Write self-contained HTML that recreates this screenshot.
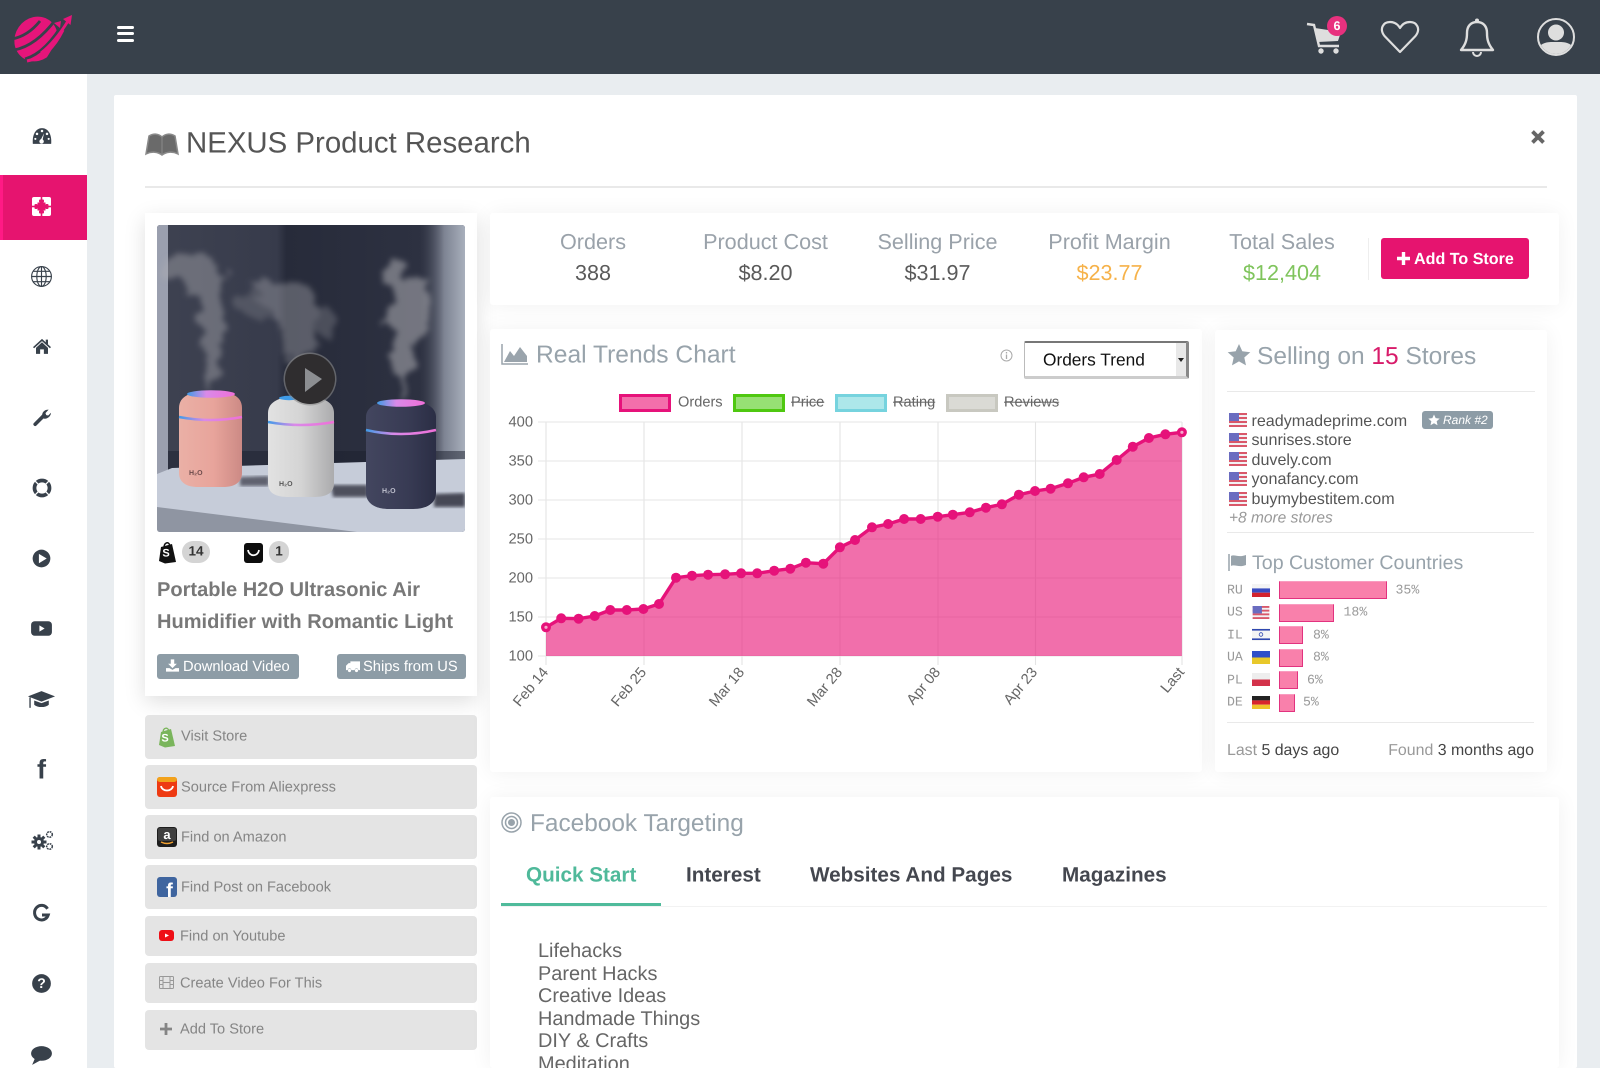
<!DOCTYPE html>
<html><head><meta charset="utf-8"><title>NEXUS Product Research</title>
<style>
*{box-sizing:border-box}
html,body{margin:0;padding:0;width:1600px;height:1068px;overflow:hidden;background:#fff;font-family:"Liberation Sans",Arial,sans-serif;text-rendering:geometricPrecision}
#root{position:absolute;left:0;top:0;width:1600px;height:1068px;overflow:hidden;background:#e9edf0}
.a{position:absolute}
.t{position:absolute;white-space:nowrap;line-height:1;transform:translateY(-50%)}
.c{transform:translate(-50%,-50%)}
.card{position:absolute;background:#fff;border-radius:3px;box-shadow:0 1px 22px rgba(0,0,0,.06)}
.lb{position:absolute;left:145px;width:332px;background:#e4e4e4;border-radius:4px}
.lt{color:#858585;font-size:14.6px}
.gb{position:absolute;top:654px;height:25px;background:#8d9ca6;border-radius:3px;color:#fff;font-size:14.7px;line-height:26px;white-space:nowrap}
.stl{color:#9aa2aa;font-size:21.6px}
.stv{color:#5a5a5a;font-size:21.6px}
.h{color:#98a3ab}
.st{color:#555;font-size:16.1px}
.m{font-family:"Liberation Mono",monospace;font-size:13.2px;color:#999}
.bar{position:absolute;left:1279px;height:18px;background:#f980ab;border:1px solid #e2327f;border-top-color:#f99cc0}
.tab{font-weight:bold;font-size:20.7px;color:#44474f}
.li{color:#666;font-size:19.9px;left:538px}
.lg{position:absolute;top:394px;height:18px;width:52px;border-width:3px;border-style:solid}
.lgt{font-size:14.6px;color:#666}
.si{position:absolute;left:29px;width:25px;height:25px}
svg{display:block;overflow:visible}
</style></head><body><div id="root">
<svg width="0" height="0" style="position:absolute"><defs>
<symbol id="us" viewBox="0 0 18 14"><rect width="18" height="14" rx="1" fill="#f2f2f4"/><rect y="0" width="18" height="2" fill="#d9586a"/><rect y="4" width="18" height="2" fill="#d9586a"/><rect y="8" width="18" height="2" fill="#d9586a"/><rect y="12" width="18" height="2" fill="#d9586a"/><rect width="10" height="8" fill="#6a6cc0"/></symbol>
<filter id="sm" x="-40%" y="-40%" width="180%" height="180%"><feTurbulence type="fractalNoise" baseFrequency=".045" numOctaves="4" seed="7"/><feDisplacementMap in="SourceGraphic" scale="30" xChannelSelector="R" yChannelSelector="G"/><feGaussianBlur stdDeviation="2.800"/></filter>
<filter id="bl1"><feGaussianBlur stdDeviation="1.500"/></filter>
<linearGradient id="wall" x1="0" x2="1" y1="0" y2="0"><stop offset="0" stop-color="#3e4251"/><stop offset=".39" stop-color="#373b4b"/><stop offset=".42" stop-color="#272b3a"/><stop offset=".85" stop-color="#2d3141"/><stop offset="1" stop-color="#4a4e5c"/></linearGradient>
<linearGradient id="rw" x1="0" x2="1" y1="0" y2="0"><stop offset="0" stop-color="#2e3242" stop-opacity="0"/><stop offset=".55" stop-color="#7e8493"/><stop offset="1" stop-color="#a8afbc"/></linearGradient>
<linearGradient id="pk" x1="0" x2="1"><stop offset="0" stop-color="#eab0a6"/><stop offset=".55" stop-color="#e8a49b"/><stop offset="1" stop-color="#cc8a85"/></linearGradient>
<linearGradient id="wh" x1="0" x2="1"><stop offset="0" stop-color="#e2e2e2"/><stop offset=".5" stop-color="#d4d4d4"/><stop offset="1" stop-color="#ababad"/></linearGradient>
<linearGradient id="nv" x1="0" x2="1"><stop offset="0" stop-color="#43465f"/><stop offset=".6" stop-color="#383b54"/><stop offset="1" stop-color="#2b2e45"/></linearGradient>
<linearGradient id="rg" x1="0" x2="1"><stop offset="0" stop-color="#3f9be8"/><stop offset=".4" stop-color="#d98ae8"/><stop offset="1" stop-color="#ef6fd8"/></linearGradient>
</defs></svg>

<!-- header -->
<div class="a" style="left:0;top:0;width:1600px;height:74px;background:#38414b"></div>
<svg class="a" style="left:10px;top:12px" width="66" height="54" viewBox="0 0 66 54">
<ellipse cx="26" cy="27" rx="21" ry="23" fill="#e5157a" transform="rotate(35 26 27)"/>
<path d="M34 50 L60 8 L66 14 L48 46Z" fill="#38414b"/>
<g fill="none" stroke="#38414b" stroke-width="2.800"><path d="M2 27 Q18 24 30 9"/><path d="M4 38 Q26 34 46 7"/><path d="M15 47 Q36 41 55 8"/></g>
<path d="M17 49 C34 46 44 36 53 18" fill="none" stroke="#e5157a" stroke-width="3"/>
<path d="M31 41 C40 34 50 22 58 9" fill="none" stroke="#e5157a" stroke-width="2.800"/>
<path d="M62 3 L60.500 13 L53 7Z" fill="#e5157a"/><path d="M51 9 L50 16 L44 11Z" fill="#e5157a"/>
</svg>
<div class="a" style="left:117px;top:26px;width:17px;height:3px;background:#fff;border-radius:2px"></div>
<div class="a" style="left:117px;top:32px;width:17px;height:3px;background:#fff;border-radius:2px"></div>
<div class="a" style="left:117px;top:39px;width:17px;height:3px;background:#fff;border-radius:2px"></div>

<svg class="a" style="left:1305px;top:20px" width="40" height="36" viewBox="0 0 40 36">
<path d="M2 4 L9 5 L14 26 L34 26" fill="none" stroke="#dedede" stroke-width="2.400"/>
<path d="M10 8 L36 12 L33 21 L13 22Z" fill="#dedede"/>
<circle cx="16" cy="31" r="2.700" fill="#dedede"/><circle cx="31" cy="31" r="2.700" fill="#dedede"/>
</svg>
<div class="a" style="left:1327px;top:16px;width:20px;height:20px;border-radius:50%;background:#e8317e"></div>
<div class="t c" style="left:1337px;top:26px;font-size:12.500px;font-weight:bold;color:#fff">6</div>
<svg class="a" style="left:1380px;top:20px" width="40" height="34" viewBox="0 0 40 34"><path d="M20 32 L4.500 16 C-1 9 3 2 10 2 C14.500 2 18 4.500 20 8 C22 4.500 25.500 2 30 2 C37 2 41 9 35.500 16Z" fill="none" stroke="#dedede" stroke-width="2.200" stroke-linejoin="round"/></svg>
<svg class="a" style="left:1459px;top:17px" width="36" height="40" viewBox="0 0 36 40"><path d="M2 33 C7 27 8 22 8 16 C8 9 12 5 18 5 C24 5 28 9 28 16 C28 22 29 27 34 33Z" fill="none" stroke="#dedede" stroke-width="2.400" stroke-linejoin="round"/><circle cx="18" cy="3.500" r="2" fill="#dedede"/><path d="M14 35 A4 4 0 0 0 22 35" fill="none" stroke="#dedede" stroke-width="2"/></svg>
<svg class="a" style="left:1536px;top:17px" width="40" height="40" viewBox="0 0 40 40"><defs><clipPath id="uc"><circle cx="20" cy="20" r="17"/></clipPath></defs><circle cx="20" cy="20" r="18" fill="none" stroke="#dedede" stroke-width="2"/><circle cx="20" cy="15.500" r="8" fill="#dedede"/><path d="M2 40 L2 30 C8 25 13 25 16 25 L24 25 C27 25 32 25 38 30 L38 40Z" fill="#dedede" clip-path="url(#uc)"/></svg>

<!-- sidebar -->
<div class="a" style="left:0;top:74px;width:87px;height:994px;background:#fff"></div>
<div class="a" style="left:0;top:175px;width:87px;height:65px;background:#e6146f;border-left:3px solid #ff1a85"></div>
<svg class="a" style="left:31.500px;top:127px" width="20" height="18" viewBox="0 0 24 21"><path d="M1 20 C0 8 5 1 12 1 C19 1 24 8 23 20Z" fill="#38414b"/><path d="M12 18 L14.500 7 L10 16Z" fill="#fff"/><circle cx="11.500" cy="17" r="2.700" fill="#fff"/><circle cx="12" cy="4.500" r="1.500" fill="#fff"/><circle cx="6" cy="8" r="1.500" fill="#fff"/><circle cx="18" cy="8" r="1.500" fill="#fff"/><circle cx="4" cy="14" r="1.300" fill="#fff"/><circle cx="20" cy="14" r="1.300" fill="#fff"/></svg>
<svg class="a" style="left:32px;top:197px" width="19" height="19" viewBox="0 0 19 19"><rect width="19" height="19" rx="2" fill="#fff"/><rect x="5.500" y="5.500" width="8" height="8" fill="#e6146f"/><rect x="8.700" y="0" width="1.600" height="19" fill="#e6146f"/><rect x="0" y="8.700" width="19" height="1.600" fill="#e6146f"/><rect x="7" y="2.500" width="5" height="3" rx="1" fill="#e6146f"/><rect x="7" y="13.500" width="5" height="3" rx="1" fill="#e6146f"/><rect x="2.500" y="7" width="3" height="5" rx="1" fill="#e6146f"/><rect x="13.500" y="7" width="3" height="5" rx="1" fill="#e6146f"/></svg>
<svg class="si" style="top:264px" viewBox="0 0 24 24" fill="none" stroke="#38414b" stroke-width="1.100"><circle cx="12" cy="12" r="9.500"/><ellipse cx="12" cy="12" rx="4.500" ry="9.500"/><path d="M12 2.500V21.500M2.500 12H21.500M4 7H20M4 17H20"/></svg>
<svg class="a" style="left:32.500px;top:338px" width="18" height="16" viewBox="0 0 24 21"><path d="M12 1 L24 12 L22.500 13.500 L12 4 L1.500 13.500 L0 12Z" fill="#38414b"/><path d="M4 13 L12 5.500 L20 13 V21 H14.500 V15 H9.500 V21 H4Z" fill="#38414b"/><rect x="17" y="2" width="3" height="6" fill="#38414b"/></svg>
<svg class="a" style="left:32px;top:408px" width="19" height="19" viewBox="0 0 24 24"><path d="M4 20.500 L14 10.500" stroke="#38414b" stroke-width="4.500" stroke-linecap="round"/><path d="M13 11 C12 6 15 2 21 2 L17 6.500 L18 9 L20.500 9.500 L24 6 C24 11 18 15 14 13Z" fill="#38414b"/></svg>
<svg class="a" style="left:32px;top:478px" width="20" height="20" viewBox="0 0 24 24" fill="none" stroke="#38414b"><circle cx="12" cy="12" r="9" stroke-width="4.500"/><path d="M4 4L9 9M20 4L15 9M4 20L9 15M20 20L15 15" stroke="#fff" stroke-width="1.500"/></svg>
<svg class="si" style="top:546px" viewBox="0 0 24 24"><circle cx="12" cy="12" r="8.500" fill="#38414b"/><path d="M9.500 7.500 L17 12 L9.500 16.500Z" fill="#fff"/></svg>
<svg class="si" style="top:616px" viewBox="0 0 24 24"><rect x="2" y="5" width="20" height="14" rx="3.500" fill="#38414b"/><path d="M10 9 L15 12 L10 15Z" fill="#fff"/></svg>
<svg class="si" style="top:687px" viewBox="0 0 24 24"><path d="M12 4 L25 9 L12 14 L-1 9Z" fill="#38414b"/><path d="M5 13 V17 C8 20 16 20 19 17 V13 L12 15.500Z" fill="#38414b"/><path d="M1 10V20" stroke="#38414b" stroke-width="1.300"/></svg>
<div class="t c" style="left:41.500px;top:770px;font-size:27px;font-weight:bold;color:#38414b">f</div>
<svg class="a" style="left:31px;top:830px" width="23" height="21" viewBox="0 0 23 21"><g fill="#38414b"><circle cx="8" cy="12" r="5"/><path d="M6.500 4.500H9.500V19.500H6.500ZM.5 10.500H15.500V13.500H.5Z"/><path d="M6.500 4.500H9.500V19.500H6.500ZM.5 10.500H15.500V13.500H.5Z" transform="rotate(45 8 12)"/></g><circle cx="8" cy="12" r="2" fill="#fff"/><g fill="#fff" stroke="#38414b" stroke-width="1.500" stroke-dasharray="1.800 .8"><circle cx="18.500" cy="4.500" r="2.800"/><circle cx="18.500" cy="16.500" r="2.800"/></g></svg>
<svg class="a" style="left:33px;top:905px" width="17" height="18" viewBox="0 0 17 18"><path d="M14.500 3.800 A7 7.300 0 1 0 15.200 10 H9" fill="none" stroke="#38414b" stroke-width="3"/></svg>
<svg class="si" style="top:971px" viewBox="0 0 24 24"><circle cx="12" cy="12" r="9" fill="#38414b"/></svg>
<div class="t c" style="left:41.500px;top:983px;font-size:14px;font-weight:bold;color:#fff">?</div>
<svg class="si" style="top:1042px" viewBox="0 0 24 24"><ellipse cx="12" cy="11" rx="10" ry="7" fill="#38414b"/><path d="M6 15 L3 22 L12 17Z" fill="#38414b"/></svg>

<!-- main -->
<div class="a" style="left:114px;top:95px;width:1463px;height:973px;background:#fff;border-radius:2px"></div>
<svg class="a" style="left:145px;top:131px" width="34" height="26" viewBox="0 0 34 26"><path d="M1 23 L4 5 C9 2 14 3 17 6 C20 3 25 2 30 5 L33 23 C27 20 21 21 17 24 C13 21 7 20 1 23Z" fill="#6a6a6a" stroke="#8a8a8a" stroke-width="1.500"/><path d="M17 6V24" stroke="#8a8a8a"/></svg>
<div class="t" style="left:186px;top:143px;font-size:29.400px;color:#555">NEXUS Product Research</div>
<svg class="a" style="left:1530px;top:129px" width="16" height="16" viewBox="0 0 16 16"><path d="M2.500 2.500L13.500 13.500M13.500 2.500L2.500 13.500" stroke="#666" stroke-width="3.800"/></svg>
<div class="a" style="left:145px;top:186px;width:1402px;height:2px;background:#e9e9e9"></div>

<!-- product card -->
<div class="a" style="left:145px;top:213px;width:332px;height:483px;background:#fff;box-shadow:0 6px 20px rgba(0,0,0,.13)"></div>
<svg class="a" style="left:157px;top:225px;border-radius:3px" width="308" height="307" viewBox="0 0 308 307">
<defs><clipPath id="ic"><rect width="308" height="307" rx="3"/></clipPath></defs>
<g clip-path="url(#ic)">
<rect width="308" height="307" fill="url(#wall)"/>
<rect x="262" width="46" height="240" fill="url(#rw)"/>
<rect width="11" height="250" fill="#9a9fae"/>
<rect x="11" y="226" width="297" height="30" fill="#1c202d" opacity=".5"/>
<path d="M0 249 L15 243 L110 240 L308 234 V307 H0Z" fill="#c6ccd9"/>
<path d="M0 282 L200 307 H0Z" fill="#8f95a2"/>
<g filter="url(#sm)" fill="#aeaeb2">
<g opacity=".42"><ellipse cx="56" cy="145" rx="4" ry="24"/><ellipse cx="56" cy="115" rx="9" ry="26"/><ellipse cx="54" cy="85" rx="13" ry="24"/><ellipse cx="46" cy="55" rx="20" ry="20"/><ellipse cx="32" cy="42" rx="22" ry="14"/></g>
<g opacity=".38"><ellipse cx="140" cy="115" rx="18" ry="20"/><ellipse cx="140" cy="85" rx="24" ry="25"/><ellipse cx="125" cy="68" rx="24" ry="15"/><ellipse cx="100" cy="78" rx="22" ry="13" opacity=".6"/><ellipse cx="165" cy="98" rx="14" ry="14" opacity=".7"/></g>
<g opacity=".55"><ellipse cx="248" cy="160" rx="4" ry="18"/><ellipse cx="248" cy="130" rx="10" ry="24"/><ellipse cx="250" cy="98" rx="19" ry="28"/><ellipse cx="254" cy="70" rx="20" ry="20"/><ellipse cx="240" cy="52" rx="12" ry="12"/></g>
</g>
<path d="M83 252 L112 251 L112 261 L83 261Z" fill="#1a1d29" opacity=".6" filter="url(#bl1)"/>
<path d="M174 260 L211 260 L211 272 L176 272Z" fill="#1a1d29" opacity=".7" filter="url(#bl1)"/>
<path d="M277 269 L308 268 V282 L277 282Z" fill="#1a1d29" opacity=".75" filter="url(#bl1)"/>
<path d="M22 183 C22 171 34 166 54 166 C74 166 85 171 85 183 L85 248 C85 257 78 262 66 262 L41 262 C29 262 22 257 22 248Z" fill="url(#pk)"/>
<ellipse cx="54" cy="169" rx="24" ry="3.800" fill="url(#rg)"/>
<path d="M22 192 Q54 198 85 192" fill="none" stroke="url(#rg)" stroke-width="2.500"/>
<text x="32" y="250" font-family="Liberation Sans" font-size="7" font-weight="bold" fill="#6b4a4a">H₂O</text>
<path d="M111 188 C111 176 124 171 144 171 C164 171 177 176 177 188 L177 258 C177 268 170 272 156 272 L132 272 C118 272 111 268 111 258Z" fill="url(#wh)"/>
<ellipse cx="132" cy="173" rx="10" ry="2.200" fill="#3f9be8"/>
<path d="M111 197 Q144 203 177 197" fill="none" stroke="url(#rg)" stroke-width="2.500"/>
<text x="122" y="261" font-family="Liberation Sans" font-size="7" font-weight="bold" fill="#555">H₂O</text>
<path d="M209 192 C209 181 222 175 244 175 C266 175 279 181 279 192 L279 268 C279 278 270 284 256 284 L232 284 C218 284 209 278 209 268Z" fill="url(#nv)"/>
<ellipse cx="244" cy="178" rx="24" ry="3.800" fill="url(#rg)"/>
<path d="M209 205 Q244 213 279 205" fill="none" stroke="url(#rg)" stroke-width="2.500"/>
<text x="225" y="268" font-family="Liberation Sans" font-size="7" font-weight="bold" fill="#c0c2cf">H₂O</text>
<circle cx="153" cy="154" r="26.500" fill="#8a8a8a" opacity=".6"/>
<circle cx="153" cy="154" r="25" fill="#2f2d2f"/>
<path d="M148 143 L165 154 L148 167Z" fill="#8c8e92"/>
</g></svg>

<svg class="a" style="left:158px;top:541px" width="19" height="23" viewBox="0 0 19 23"><path d="M1 20 L3 6 L14 3 L18 21 L7 22.500Z" fill="#111"/><path d="M6 7 C6 1 11 0 12 5" fill="none" stroke="#111" stroke-width="1.500"/></svg>
<div class="t c" style="left:166px;top:554px;font-size:11px;font-weight:bold;color:#fff">S</div>
<div class="a" style="left:182px;top:541px;width:28px;height:22px;background:#d4d4d4;border-radius:11px"></div>
<div class="t c" style="left:196px;top:551px;font-size:13.500px;font-weight:bold;color:#333">14</div>
<svg class="a" style="left:244px;top:543px" width="19" height="20" viewBox="0 0 19 20"><rect width="19" height="20" rx="3" fill="#0d0d0d"/><path d="M4 7 C5 14 14 14 15 7" fill="none" stroke="#fff" stroke-width="1.700"/></svg>
<div class="a" style="left:269px;top:541px;width:20px;height:22px;background:#d4d4d4;border-radius:11px"></div>
<div class="t c" style="left:279px;top:551px;font-size:13.500px;font-weight:bold;color:#333">1</div>
<div class="t" style="left:157px;top:590px;font-size:20.050px;font-weight:bold;color:#787878">Portable H2O Ultrasonic Air</div>
<div class="t" style="left:157px;top:622px;font-size:20.050px;font-weight:bold;color:#787878">Humidifier with Romantic Light</div>
<div class="gb" style="left:157px;width:142px;padding-left:26px">Download Video</div>
<svg class="a" style="left:166px;top:659px" width="13" height="13" viewBox="0 0 15 14"><path d="M5.500 0H9.500V5H12.500L7.500 10L2.500 5H5.500Z" fill="#fff"/><path d="M0 10H4L7.500 12L11 10H15V14H0Z" fill="#fff"/></svg>
<div class="gb" style="left:337px;width:129px;padding-left:26px">Ships from US</div>
<svg class="a" style="left:346px;top:661px" width="14" height="12" viewBox="0 0 16 13"><path d="M5 0H16V10H14A2 2 0 0 0 10 10H6A2 2 0 0 0 2 10H0V5L3 2H5Z" fill="#fff"/><circle cx="4" cy="10.500" r="1.800" fill="#fff"/><circle cx="12" cy="10.500" r="1.800" fill="#fff"/></svg>

<div class="lb" style="top:715px;height:44px"></div>
<svg class="a" style="left:158px;top:727px" width="18" height="21" viewBox="0 0 18 21"><path d="M1 18 L3 5 L13 2 L17 19 L7 20.500Z" fill="#7ab55c"/><path d="M5 6 C5 0 10 0 11 4" fill="none" stroke="#7ab55c" stroke-width="1.300"/></svg>
<div class="t c" style="left:165px;top:739px;font-size:11px;font-weight:bold;color:#fff">S</div>
<div class="t lt" style="left:181px;top:737px">Visit Store</div>
<div class="lb" style="top:765px;height:44px"></div>
<svg class="a" style="left:157px;top:777px" width="20" height="20" viewBox="0 0 20 20"><rect width="20" height="20" rx="3" fill="#ee3a12"/><rect width="20" height="5" rx="3" fill="#f2a21c"/><path d="M4 9 C5 15 15 15 16 9" fill="none" stroke="#fff" stroke-width="1.800"/></svg>
<div class="t lt" style="left:181px;top:787.500px">Source From Aliexpress</div>
<div class="lb" style="top:815px;height:44px"></div>
<svg class="a" style="left:157px;top:827px" width="20" height="20" viewBox="0 0 20 20"><rect width="20" height="20" rx="3" fill="#1d1d1d"/><rect x="1" y="1" width="18" height="13" rx="2" fill="#3f3f3f"/><text x="10" y="12" text-anchor="middle" font-family="Liberation Sans" font-weight="bold" font-size="13" fill="#fff">a</text><path d="M4 15 Q10 18 16 15" fill="none" stroke="#f0a030" stroke-width="1.500"/></svg>
<div class="t lt" style="left:181px;top:838px">Find on Amazon</div>
<div class="lb" style="top:865px;height:44px"></div>
<svg class="a" style="left:157px;top:877px" width="20" height="20" viewBox="0 0 20 20"><rect width="20" height="20" rx="3" fill="#3f659f"/><text x="12.500" y="20" text-anchor="middle" font-family="Liberation Sans" font-weight="bold" font-size="20" fill="#fff">f</text></svg>
<div class="t lt" style="left:181px;top:888px">Find Post on Facebook</div>
<div class="lb" style="top:916px;height:40px"></div>
<svg class="a" style="left:159px;top:930px" width="15" height="11" viewBox="0 0 15 11"><rect width="15" height="11" rx="3" fill="#ee0f16"/><path d="M6 3.500L10 5.500L6 7.500Z" fill="#fff"/></svg>
<div class="t lt" style="left:180px;top:937px">Find on Youtube</div>
<div class="lb" style="top:963px;height:40px"></div>
<svg class="a" style="left:159px;top:976px" width="15" height="13" viewBox="0 0 15 13" fill="none" stroke="#999" stroke-width="1"><rect x=".5" y=".5" width="14" height="12" rx="1"/><path d="M4 .5V12.500M11 .5V12.500M.5 4.500H4M.5 8.500H4M11 4.500H14.500M11 8.500H14.500M4 6.500H11"/></svg>
<div class="t lt" style="left:180px;top:984px">Create Video For This</div>
<div class="lb" style="top:1010px;height:40px"></div>
<svg class="a" style="left:160px;top:1023px" width="12" height="12" viewBox="0 0 12 12"><path d="M6 0V12M0 6H12" stroke="#858585" stroke-width="2.800"/></svg>
<div class="t lt" style="left:180px;top:1030px">Add To Store</div>

<!-- stats -->
<div class="card" style="left:490px;top:213px;width:1069px;height:92px"></div>
<div class="t c stl" style="left:593px;top:242px">Orders</div><div class="t c stv" style="left:593px;top:273px">388</div>
<div class="t c stl" style="left:765.500px;top:242px">Product Cost</div><div class="t c stv" style="left:765.500px;top:273px">$8.20</div>
<div class="t c stl" style="left:937.500px;top:242px">Selling Price</div><div class="t c stv" style="left:937.500px;top:273px">$31.97</div>
<div class="t c stl" style="left:1109.500px;top:242px">Profit Margin</div><div class="t c stv" style="left:1109.500px;top:273px;color:#f6b24a">$23.77</div>
<div class="t c stl" style="left:1282px;top:242px">Total Sales</div><div class="t c stv" style="left:1282px;top:273px;color:#7fc45c">$12,404</div>
<div class="a" style="left:1368px;top:238px;width:1px;height:42px;background:#eee"></div>
<div class="a" style="left:1381px;top:238px;width:148px;height:41px;background:#e6146f;border-radius:3px"></div>
<svg class="a" style="left:1397px;top:252px" width="13" height="13" viewBox="0 0 13 13"><path d="M6.500 0V13M0 6.500H13" stroke="#fff" stroke-width="3.400"/></svg>
<div class="t" style="left:1414px;top:258.500px;font-size:16.100px;font-weight:bold;color:#fff">Add To Store</div>

<!-- chart card -->
<div class="card" style="left:490px;top:329px;width:712px;height:443px"></div>
<svg class="a" style="left:501px;top:344px" width="27" height="21" viewBox="0 0 27 21"><path d="M1 0V20H27" fill="none" stroke="#9aa4ac" stroke-width="1.500"/><path d="M3 18 L9 7 L13 12 L19 3 L26 12 V18Z" fill="#9aa4ac"/></svg>
<div class="t h" style="left:536px;top:356px;font-size:24.600px">Real Trends Chart</div>
<svg class="a" style="left:1000px;top:349px" width="13" height="13" viewBox="0 0 13 13"><circle cx="6.500" cy="6.500" r="5.500" fill="none" stroke="#aaa"/><path d="M6.500 5.500V10M6.500 3V4.500" stroke="#aaa" stroke-width="1.300"/></svg>
<div class="a" style="left:1024px;top:341px;width:165px;height:38px;background:#fff;border:1px solid #bbb;border-top:2px solid #777;border-right:3px solid #888;border-bottom:3px solid #ccc;border-radius:2px"></div>
<div class="a" style="left:1176px;top:343px;width:10px;height:33px;background:#e8e8e8"></div>
<div class="a" style="left:1178px;top:358px;width:0;height:0;border:3px solid transparent;border-top:4px solid #222"></div>
<div class="t" style="left:1043px;top:360px;font-size:17.300px;color:#111">Orders Trend</div>

<div class="lg" style="left:619px;background:#f36fab;border-color:#e6127a"></div><div class="t lgt" style="left:678px;top:403px">Orders</div>
<div class="lg" style="left:733px;background:#97e074;border-color:#4fc810"></div><div class="t lgt" style="left:791px;top:403px;text-decoration:line-through">Price</div>
<div class="lg" style="left:835px;background:#ade7ea;border-color:#76d3de"></div><div class="t lgt" style="left:893px;top:403px;text-decoration:line-through">Rating</div>
<div class="lg" style="left:946px;background:#dadad5;border-color:#c8c8c0"></div><div class="t lgt" style="left:1004px;top:403px;text-decoration:line-through">Reviews</div>

<svg class="a" style="left:0;top:0" width="1600" height="1068" viewBox="0 0 1600 1068">
<defs><marker id="dot" markerUnits="userSpaceOnUse" markerWidth="12" markerHeight="12" refX="6" refY="6"><circle cx="6" cy="6" r="5" fill="#e6127a"/></marker></defs>
<g stroke="#ebebeb" stroke-width="1.200"><path d="M538 422H1182M538 461H1182M538 500H1182M538 539H1182M538 578H1182M538 617H1182M538 656H1182"/></g>
<g stroke="#e4e4e4" stroke-width="1.100"><path d="M546 422V665M644 422V665M742 422V665M840 422V665M938 422V665M1035.500 422V665M1182 422V665"/></g>
<polygon fill="rgba(233,22,120,.62)" points="546,656 546,627.300 561.200,618.300 578.600,618.700 594.700,616 610.300,610 626.800,610 643.400,609 659,604 676,577.700 692,575.700 708.100,574.700 725.100,574.300 741.100,573.300 757.200,573.300 774.200,570.700 790.300,568.700 805.900,562.700 823.300,563.700 839.900,547.300 855,540 872,527.300 888.100,524 904.100,519 920.700,519 937.700,516.700 952.800,514.700 969.800,512.300 985.900,507.700 1001.900,504.300 1018.900,494.700 1035,491 1050.600,488.700 1068,483.300 1083.700,477.300 1099.700,474 1116.700,460 1132.800,446.700 1148.900,438 1165.400,434.300 1181.900,432.300 1181.900,656"/>
<polyline fill="none" stroke="#e6127a" stroke-width="3.400" marker-start="url(#dot)" marker-mid="url(#dot)" marker-end="url(#dot)" points="546,627.300 561.200,618.300 578.600,618.700 594.700,616 610.300,610 626.800,610 643.400,609 659,604 676,577.700 692,575.700 708.100,574.700 725.100,574.300 741.100,573.300 757.200,573.300 774.200,570.700 790.300,568.700 805.900,562.700 823.300,563.700 839.900,547.300 855,540 872,527.300 888.100,524 904.100,519 920.700,519 937.700,516.700 952.800,514.700 969.800,512.300 985.900,507.700 1001.900,504.300 1018.900,494.700 1035,491 1050.600,488.700 1068,483.300 1083.700,477.300 1099.700,474 1116.700,460 1132.800,446.700 1148.900,438 1165.400,434.300 1181.900,432.300"/>
<circle cx="546" cy="627.300" r="1.600" fill="#f7a8cc"/><circle cx="1181.900" cy="432.300" r="1.600" fill="#f7a8cc"/>
<g font-family="Liberation Sans" font-size="14.700" fill="#666" text-anchor="end">
<text x="533" y="426.300">400</text><text x="533" y="465.300">350</text><text x="533" y="504.300">300</text><text x="533" y="543.300">250</text><text x="533" y="582.300">200</text><text x="533" y="621.300">150</text><text x="533" y="660.300">100</text>
<text transform="translate(549,672.500) rotate(-50)">Feb 14</text>
<text transform="translate(647,672.500) rotate(-50)">Feb 25</text>
<text transform="translate(745,672.500) rotate(-50)">Mar 18</text>
<text transform="translate(843,672.500) rotate(-50)">Mar 28</text>
<text transform="translate(941,672.500) rotate(-50)">Apr 08</text>
<text transform="translate(1038,672.500) rotate(-50)">Apr 23</text>
<text transform="translate(1185,672.500) rotate(-50)">Last</text>
</g></svg>

<!-- stores card -->
<div class="card" style="left:1215px;top:330px;width:332px;height:442px"></div>
<svg class="a" style="left:1227px;top:343px" width="24" height="24" viewBox="0 0 24 24"><path d="M12 1 L15.300 8.300 L23.300 9.200 L17.300 14.500 L19 22.400 L12 18.400 L5 22.400 L6.700 14.500 L.7 9.200 L8.700 8.300Z" fill="#98a3ab"/></svg>
<div class="t h" style="left:1257px;top:357px;font-size:24.500px">Selling on <span style="color:#d81b6a">15</span> Stores</div>
<div class="a" style="left:1227px;top:391px;width:308px;height:1px;background:#e9e9e9"></div>
<svg class="a" style="left:1229px;top:413px" width="18" height="14"><use href="#us"/></svg><div class="t st" style="left:1251.500px;top:420.500px">readymadeprime.com</div>
<svg class="a" style="left:1229px;top:433px" width="18" height="14"><use href="#us"/></svg><div class="t st" style="left:1251.500px;top:440px">sunrises.store</div>
<svg class="a" style="left:1229px;top:452px" width="18" height="14"><use href="#us"/></svg><div class="t st" style="left:1251.500px;top:459.500px">duvely.com</div>
<svg class="a" style="left:1229px;top:472px" width="18" height="14"><use href="#us"/></svg><div class="t st" style="left:1251.500px;top:479px">yonafancy.com</div>
<svg class="a" style="left:1229px;top:492px" width="18" height="14"><use href="#us"/></svg><div class="t st" style="left:1251.500px;top:498.500px">buymybestitem.com</div>
<div class="t" style="left:1229px;top:518px;font-size:15.500px;font-style:italic;color:#999">+8 more stores</div>
<div class="a" style="left:1422px;top:411px;width:71px;height:18px;background:#8d9ca6;border-radius:3px"></div>
<svg class="a" style="left:1428px;top:414px" width="12" height="12" viewBox="0 0 24 24"><path d="M12 1 L15.300 8.300 L23.300 9.200 L17.300 14.500 L19 22.400 L12 18.400 L5 22.400 L6.700 14.500 L.7 9.200 L8.700 8.300Z" fill="#fff"/></svg>
<div class="t" style="left:1443px;top:420px;font-size:12px;font-style:italic;color:#fff">Rank #2</div>
<div class="a" style="left:1227px;top:532px;width:307px;height:1px;background:#e9e9e9"></div>
<svg class="a" style="left:1228px;top:554px" width="19" height="17" viewBox="0 0 19 17"><path d="M1 0V17" stroke="#98a3ab" stroke-width="1.500"/><path d="M3 2 C7 0 10 4 18 1 V11 C11 14 7 10 3 12Z" fill="#98a3ab"/></svg>
<div class="t h" style="left:1252px;top:564px;font-size:19.600px">Top Customer Countries</div>

<div class="t m" style="left:1227px;top:589.500px">RU</div>
<svg class="a" style="left:1252px;top:584px" width="18" height="13" viewBox="0 0 18 13"><rect width="18" height="4.400" fill="#f4f4f4"/><rect y="4.400" width="18" height="4.300" fill="#3a4cc0"/><rect y="8.700" width="18" height="4.300" fill="#d3232e"/></svg>
<div class="bar" style="top:581px;width:108px"></div><div class="t m" style="left:1395.500px;top:589.500px">35%</div>
<div class="t m" style="left:1227px;top:611.500px">US</div>
<svg class="a" style="left:1252px;top:606px" width="18" height="13"><use href="#us"/></svg>
<div class="bar" style="top:604px;width:55px"></div><div class="t m" style="left:1343.500px;top:611.500px">18%</div>
<div class="t m" style="left:1227px;top:634.500px">IL</div>
<svg class="a" style="left:1252px;top:628px" width="18" height="13" viewBox="0 0 18 13"><rect width="18" height="13" fill="#f4f4f4"/><rect y="1" width="18" height="1.600" fill="#2f48b0"/><rect y="10.400" width="18" height="1.600" fill="#2f48b0"/><circle cx="9" cy="6.500" r="1.800" fill="none" stroke="#2f48b0" stroke-width=".8"/></svg>
<div class="bar" style="top:626px;width:24px"></div><div class="t m" style="left:1313px;top:634.500px">8%</div>
<div class="t m" style="left:1227px;top:656.500px">UA</div>
<svg class="a" style="left:1252px;top:651px" width="18" height="13" viewBox="0 0 18 13"><rect width="18" height="6.500" fill="#2f4fc8"/><rect y="6.500" width="18" height="6.500" fill="#e8c82a"/></svg>
<div class="bar" style="top:649px;width:24px"></div><div class="t m" style="left:1313px;top:656.500px">8%</div>
<div class="t m" style="left:1227px;top:679.500px">PL</div>
<svg class="a" style="left:1252px;top:673px" width="18" height="13" viewBox="0 0 18 13"><rect width="18" height="6.500" fill="#eeeeee"/><rect y="6.500" width="18" height="6.500" fill="#d3324a"/></svg>
<div class="bar" style="top:671px;width:19px"></div><div class="t m" style="left:1307px;top:679.500px">6%</div>
<div class="t m" style="left:1227px;top:701.500px">DE</div>
<svg class="a" style="left:1252px;top:696px" width="18" height="13" viewBox="0 0 18 13"><rect width="18" height="4.400" fill="#222"/><rect y="4.400" width="18" height="4.300" fill="#d8262c"/><rect y="8.700" width="18" height="4.300" fill="#eec42a"/></svg>
<div class="bar" style="top:694px;width:16px"></div><div class="t m" style="left:1303px;top:701.500px">5%</div>
<div class="a" style="left:1227px;top:722px;width:307px;height:1px;background:#e9e9e9"></div>
<div class="t" style="left:1227px;top:751px;font-size:15.900px;color:#444"><span style="color:#999">Last</span> 5 days ago</div>
<div class="t" style="right:66px;top:751px;font-size:15.900px;color:#444"><span style="color:#999">Found</span> 3 months ago</div>

<!-- facebook card -->
<div class="card" style="left:490px;top:797px;width:1069px;height:271px"></div>
<svg class="a" style="left:501px;top:812px" width="21" height="21" viewBox="0 0 21 21" fill="none" stroke="#98a3ab"><circle cx="10.500" cy="10.500" r="9.500" stroke-width="1.500"/><circle cx="10.500" cy="10.500" r="6" stroke-width="1.500"/><circle cx="10.500" cy="10.500" r="3" fill="#98a3ab"/></svg>
<div class="t h" style="left:530px;top:824px;font-size:24.400px">Facebook Targeting</div>
<div class="t tab" style="left:526px;top:875.500px;color:#4fb99a">Quick Start</div>
<div class="t tab" style="left:686px;top:875.500px">Interest</div>
<div class="t tab" style="left:810px;top:875.500px">Websites And Pages</div>
<div class="t tab" style="left:1062px;top:875.500px">Magazines</div>
<div class="a" style="left:501px;top:906px;width:1046px;height:1px;background:#f2f2f2"></div>
<div class="a" style="left:501px;top:903px;width:160px;height:2.500px;background:#4fbb9b"></div>
<div class="t li" style="top:952px">Lifehacks</div>
<div class="t li" style="top:975px">Parent Hacks</div>
<div class="t li" style="top:997px">Creative Ideas</div>
<div class="t li" style="top:1020px">Handmade Things</div>
<div class="t li" style="top:1042px">DIY &amp; Crafts</div>
<div class="t li" style="top:1065px">Meditation</div>
</div></body></html>
